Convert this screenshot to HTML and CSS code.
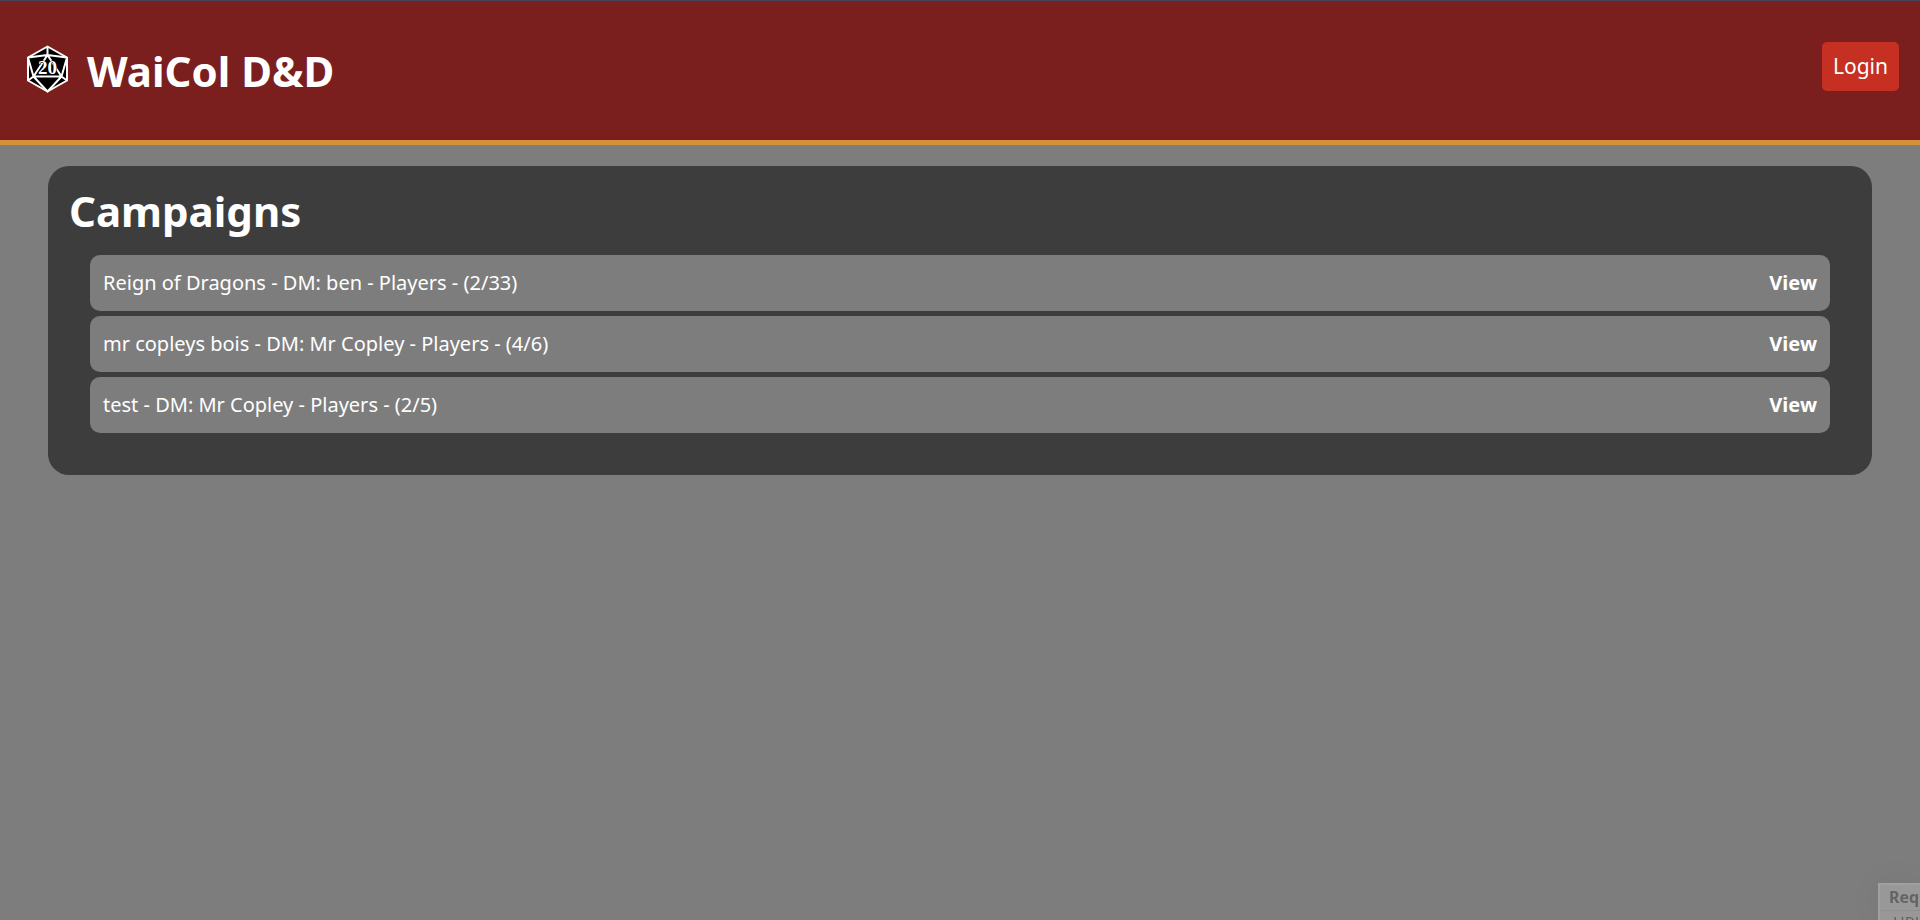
FILE: index.html
```html
<!DOCTYPE html>
<html lang="en">
<head>
<meta charset="utf-8">
<title>WaiCol D&amp;D</title>
<link rel="stylesheet" href="styles.css">
</head>
<body>
<header class="site-header">
  <div class="brand">
    <svg class="brand-logo" viewBox="0 0 42 48" aria-hidden="true">
      <path class="die" d="M21 1.500 40.500 12.500V35.500L21 46.500 1.500 35.500V12.500Z"/>
      <path class="edge" d="M21 2V10M1.500 12.500 21 10 40.500 12.500M21 10 7 31.500H35ZM1.500 12.500 7 31.500 1.500 35.500M40.500 12.500 35 31.500 40.500 35.500M7 31.500 21 46.500 35 31.500"/>
      <text class="die-number" x="21" y="29" text-anchor="middle">20</text>
    </svg>
    <h1 class="brand-title">WaiCol D&amp;D</h1>
  </div>
  <button class="login" type="button">Login</button>
</header>
<main class="panel">
  <h2 class="panel-title">Campaigns</h2>
  <ul class="campaigns">
    <li class="campaign"><span>Reign of Dragons - DM: ben - Players - (2/33)</span><a class="view" href="#reign-of-dragons">View</a></li>
    <li class="campaign"><span>mr copleys bois - DM: Mr Copley - Players - (4/6)</span><a class="view" href="#mr-copleys-bois">View</a></li>
    <li class="campaign"><span>test - DM: Mr Copley - Players - (2/5)</span><a class="view" href="#test">View</a></li>
  </ul>
</main>
<aside class="requests">
  <div class="requests-title">Req</div>
  <div class="requests-item">URL</div>
</aside>
</body>
</html>
```

FILE: styles.css
```css
* { box-sizing: border-box; }
body {
  margin: 0;
  min-height: 100vh;
  overflow: hidden;
  background: #7d7d7d;
  color: #fff;
  font-family: "Noto Sans", sans-serif;
  font-size: 20px;
}
.site-header {
  display: flex;
  justify-content: space-between;
  align-items: flex-start;
  padding: 41px 21px 41px 26px;
  border-top: 1px solid #45455a;
  border-bottom: 5px solid #d4913a;
  background: #7a1f1e;
}
.brand { display: flex; align-items: flex-start; gap: 18px; }
.brand-logo { width: 43px; height: 48px; margin-top: 3px; }
.die { fill: #000; stroke: #fff; stroke-width: 2; stroke-linejoin: round; }
.edge { fill: none; stroke: #fff; stroke-width: 2; stroke-linejoin: round; }
.die-number {
  fill: #fff;
  stroke: #000;
  stroke-width: 1;
  paint-order: stroke;
  font: bold 19px "Liberation Serif", serif;
}
.brand-title { margin: 0; font-size: 42px; line-height: 57px; }
.login {
  height: 49px;
  padding: 0 11px 2px;
  border: 0;
  border-radius: 5px;
  background: #c53022;
  color: #fff;
  font: 21px "Noto Sans", sans-serif;
}
.panel {
  margin: 21px 48px 0;
  padding: 16px 42px 42px;
  border-radius: 21px;
  background: #3d3d3d;
}
.panel-title { margin: 0 -21px 16px; font-size: 42px; line-height: 57px; }
.campaigns {
  display: flex;
  flex-direction: column;
  gap: 5px;
  margin: 0;
  padding: 0;
  list-style: none;
}
.campaign {
  display: flex;
  justify-content: space-between;
  align-items: center;
  padding: 13px;
  border-radius: 10px;
  background: #7d7d7d;
  line-height: 30px;
}
.view { color: #fff; font-weight: bold; text-decoration: none; }
.requests {
  position: fixed;
  right: 0;
  bottom: 0;
  width: 42px;
  height: 37px;
  overflow: hidden;
  border-top: 2px solid #a0a0a0;
  border-left: 2px solid #a0a0a0;
  background: #989898;
  color: #646464;
  font-size: 16px;
  white-space: nowrap;
  box-shadow: 0 0 32px rgb(0 0 0 / 6%);
}
.requests-title {
  padding-left: 9px;
  border-bottom: 1px solid #8c9090;
  font-weight: bold;
  line-height: 25px;
}
.requests-item { padding-left: 13px; line-height: 24px; }
```
